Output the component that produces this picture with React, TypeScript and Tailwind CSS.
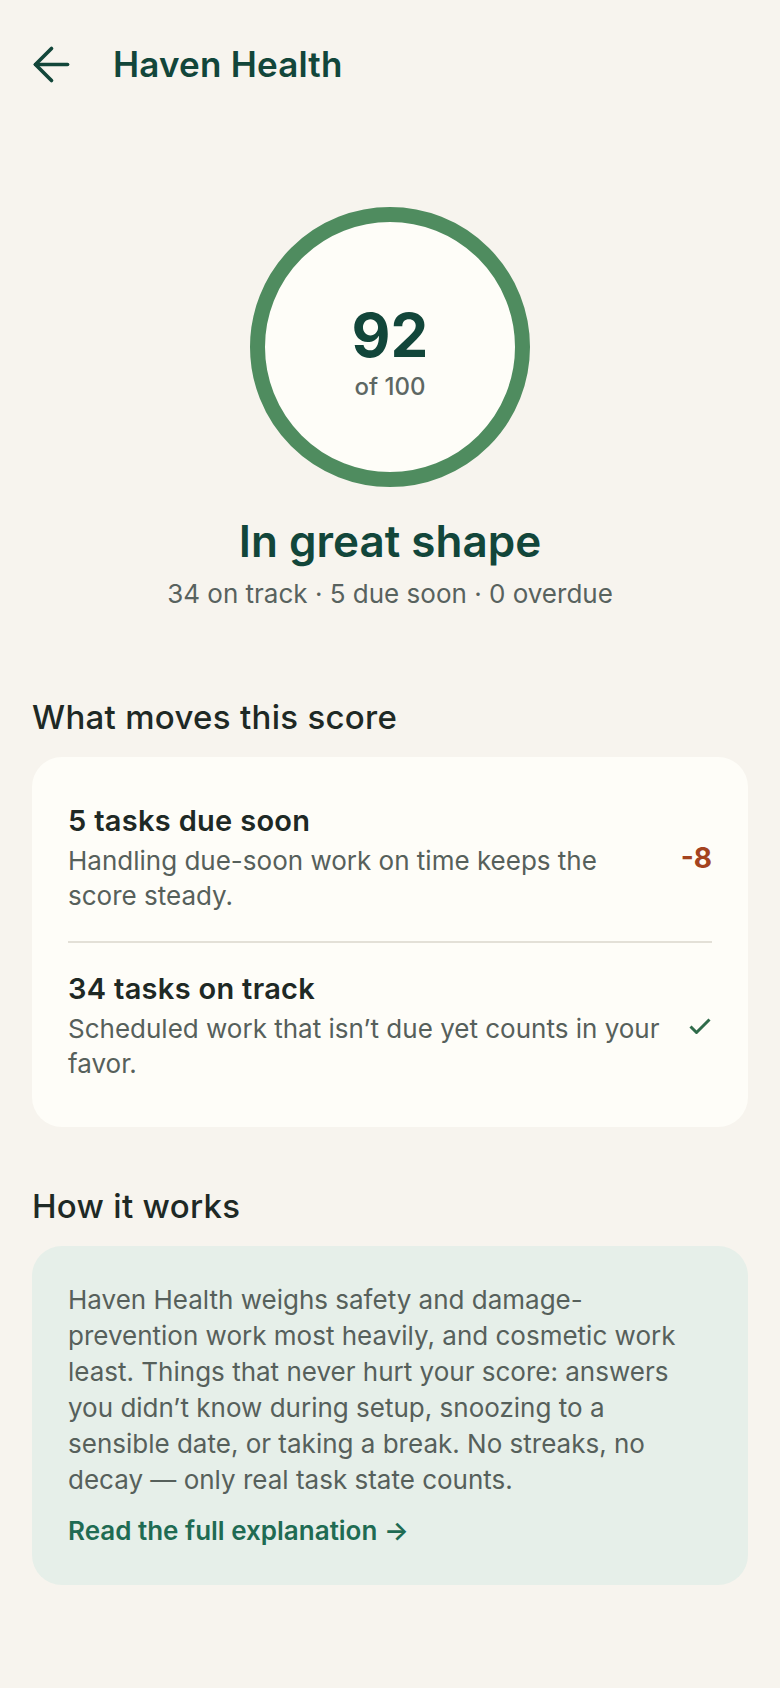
import { ArrowLeft } from 'lucide-react';

const factors = [
  {
    title: '5 tasks due soon',
    body: 'Handling due-soon work on time keeps the score steady.',
    impact: '-8',
  },
  {
    title: '34 tasks on track',
    body: 'Scheduled work that isn’t due yet counts in your favor.',
    impact: null,
  },
];

function CheckMark() {
  return (
    <svg width="24" height="18" viewBox="0 0 24 18" fill="none" aria-hidden="true">
      <path d="M2.5 9.5 8.5 15.5 21.5 2.5" stroke="#2f6b4a" strokeWidth="3" strokeLinejoin="round" />
    </svg>
  );
}

export default function App() {
  return (
    <div
      className="min-h-screen bg-[#f7f4ee] pb-24"
      style={{ fontFamily: 'Inter, "Noto Sans", sans-serif' }}
    >
      <header className="h-32 px-6 flex items-center gap-[34px]">
        <button className="text-[#12463a]">
          <ArrowLeft size={55} strokeWidth={1.6} />
        </button>
        <h1 className="text-[35px] leading-[44px] font-semibold text-[#12463a] tracking-[0.2px]">Haven Health</h1>
      </header>

      {/* score ring */}
      <section className="mt-[79px] flex flex-col items-center">
        <div className="w-[280px] h-[280px] rounded-full border-[15px] border-[#4f8c5f] bg-[#fefdf8] flex flex-col items-center justify-center pt-3">
          <div className="text-[60px] leading-[60px] font-bold text-[#12463a]">92</div>
          <div className="mt-2 text-[24px] leading-[28px] font-medium text-[#5d6763]">of 100</div>
        </div>
        <h2 className="mt-[28px] text-[44px] leading-[52px] font-semibold text-[#12463a]">In great shape</h2>
        <p className="mt-[11px] text-[26px] leading-[32px] text-[#58625e]">34 on track · 5 due soon · 0 overdue</p>
      </section>

      <section className="mt-[87px] px-8">
        <h3 className="text-[33px] leading-[40px] font-medium text-[#1e2925] tracking-[0.3px]">What moves this score</h3>
        <div className="mt-5 rounded-[30px] bg-[#fefdf8] px-9 py-[18px]">
          {factors.map((f, i) => (
            <div
              key={f.title}
              className={`flex items-center gap-4 py-7 ${i > 0 ? 'border-t-2 border-[#e3e0d7]' : ''}`}
            >
              <div className="flex-1">
                <div className="text-[29px] leading-[36px] font-semibold text-[#1e2925] tracking-[0.3px]">{f.title}</div>
                <p className="mt-1 text-[26px] leading-[35px] text-[#56605b]">{f.body}</p>
              </div>
              <div className="w-[32px] flex justify-end">
                {f.impact ? (
                  <span className="text-[28px] font-bold text-[#a4431f]">{f.impact}</span>
                ) : (
                  <CheckMark />
                )}
              </div>
            </div>
          ))}
        </div>
      </section>

      <section className="mt-[59px] px-8">
        <h3 className="text-[33px] leading-[40px] font-medium text-[#1e2925] tracking-[0.3px]">How it works</h3>
        <div className="mt-5 rounded-[30px] bg-[#e6efe9] px-9 py-9">
          <p className="text-[26px] leading-[36px] text-[#56605b]">
            Haven Health weighs safety and damage-prevention work most heavily, and cosmetic work least. Things that
            never hurt your score: answers you didn’t know during setup, snoozing to a sensible date, or taking a
            break. No streaks, no decay — only real task state counts.
          </p>
          <a className="mt-[15px] block text-[26px] leading-[36px] font-semibold text-[#1f6b53]">
            Read the full explanation →
          </a>
        </div>
      </section>
    </div>
  );
}
